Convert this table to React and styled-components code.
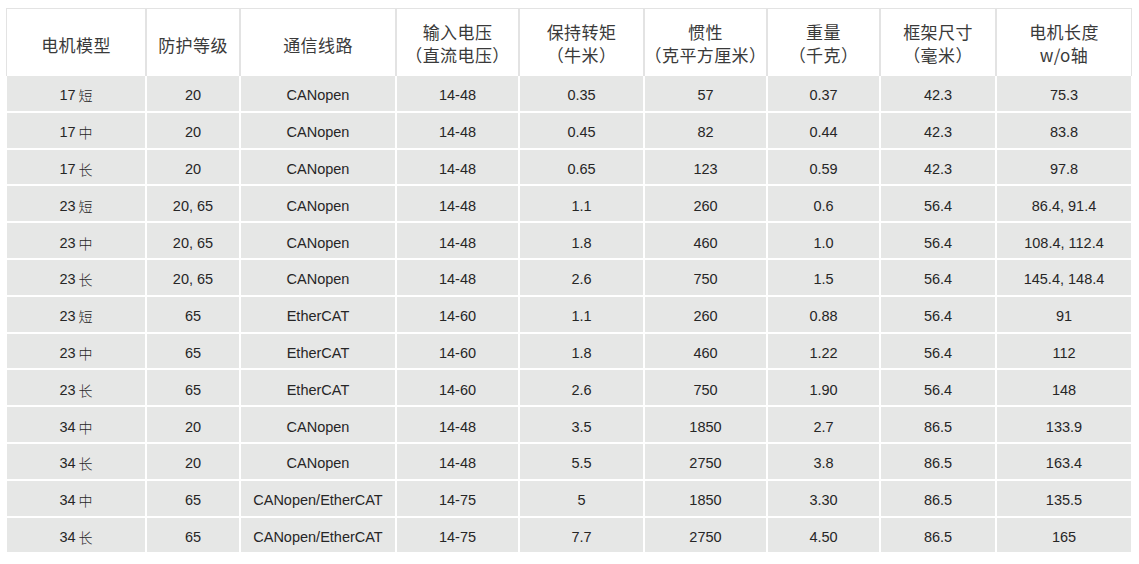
import React from 'react';
import styled, { createGlobalStyle } from 'styled-components';

const GlobalStyle = createGlobalStyle`
  html, body {
    margin: 0;
    padding: 0;
    background: #fff;
  }
  body {
    font-family: "Liberation Sans", Arial, "Noto Sans CJK SC", sans-serif;
  }
`;

const COLS = '138px 92px 154px 121px 123px 121px 111px 114px 134px';

const Page = styled.div`
  padding: 8px 0 0 7px;
  width: 1124px;
`;

const HeaderRow = styled.div`
  display: grid;
  grid-template-columns: ${COLS};
  column-gap: 2px;
  background: #e3e3e3;
  padding-top: 1px;
  box-shadow: -1px 0 0 #e3e3e3, 1px 0 0 #e3e3e3;
`;

const HeadCell = styled.div`
  background: #fff;
  height: 67px;
  display: flex;
  flex-direction: column;
  align-items: center;
  justify-content: center;
  font-family: "Noto Sans CJK SC", "Liberation Sans", sans-serif;
  font-size: 17px;
  line-height: 23px;
  color: #3a3a3a;
  letter-spacing: 0.4px;
  padding-top: ${p => (p.$single ? '4px' : '1px')};
  box-sizing: border-box;
`;

const Line = styled.div`
  height: 23px;
  white-space: nowrap;
`;

const Body = styled.div`
  display: grid;
  grid-template-columns: ${COLS};
  gap: 2px;
  background: #fff;
`;

const Cell = styled.div`
  background: #e6e7e6;
  height: 34.8px;
  box-sizing: border-box;
  padding-top: 4px;
  display: flex;
  align-items: center;
  justify-content: center;
  font-size: 14.5px;
  color: #262626;
`;

const Cjk = styled.span`
  font-family: "Noto Sans CJK SC", sans-serif;
  font-weight: 300;
  margin-left: 3px;
  font-size: 14px;
`;

const headers = [
  ['电机模型'],
  ['防护等级'],
  ['通信线路'],
  ['输入电压', '（直流电压）'],
  ['保持转矩', '（牛米）'],
  ['惯性', '（克平方厘米）'],
  ['重量', '（千克）'],
  ['框架尺寸', '（毫米）'],
  ['电机长度', 'w/o轴'],
];

const rows = [
  ['17', '短', '20', 'CANopen', '14-48', '0.35', '57', '0.37', '42.3', '75.3'],
  ['17', '中', '20', 'CANopen', '14-48', '0.45', '82', '0.44', '42.3', '83.8'],
  ['17', '长', '20', 'CANopen', '14-48', '0.65', '123', '0.59', '42.3', '97.8'],
  ['23', '短', '20, 65', 'CANopen', '14-48', '1.1', '260', '0.6', '56.4', '86.4, 91.4'],
  ['23', '中', '20, 65', 'CANopen', '14-48', '1.8', '460', '1.0', '56.4', '108.4, 112.4'],
  ['23', '长', '20, 65', 'CANopen', '14-48', '2.6', '750', '1.5', '56.4', '145.4, 148.4'],
  ['23', '短', '65', 'EtherCAT', '14-60', '1.1', '260', '0.88', '56.4', '91'],
  ['23', '中', '65', 'EtherCAT', '14-60', '1.8', '460', '1.22', '56.4', '112'],
  ['23', '长', '65', 'EtherCAT', '14-60', '2.6', '750', '1.90', '56.4', '148'],
  ['34', '中', '20', 'CANopen', '14-48', '3.5', '1850', '2.7', '86.5', '133.9'],
  ['34', '长', '20', 'CANopen', '14-48', '5.5', '2750', '3.8', '86.5', '163.4'],
  ['34', '中', '65', 'CANopen/EtherCAT', '14-75', '5', '1850', '3.30', '86.5', '135.5'],
  ['34', '长', '65', 'CANopen/EtherCAT', '14-75', '7.7', '2750', '4.50', '86.5', '165'],
];

export default function App() {
  return (
    <>
      <GlobalStyle />
      <Page>
        <HeaderRow>
          {headers.map((h, i) => (
            <HeadCell key={i} $single={h.length === 1}>
              {h.map((line, j) => (
                <Line key={j}>{line}</Line>
              ))}
            </HeadCell>
          ))}
        </HeaderRow>
        <Body>
          {rows.map((r, i) => (
            <React.Fragment key={i}>
              <Cell>
                {r[0]}
                <Cjk>{r[1]}</Cjk>
              </Cell>
              {r.slice(2).map((v, j) => (
                <Cell key={j}>{v}</Cell>
              ))}
            </React.Fragment>
          ))}
        </Body>
      </Page>
    </>
  );
}
